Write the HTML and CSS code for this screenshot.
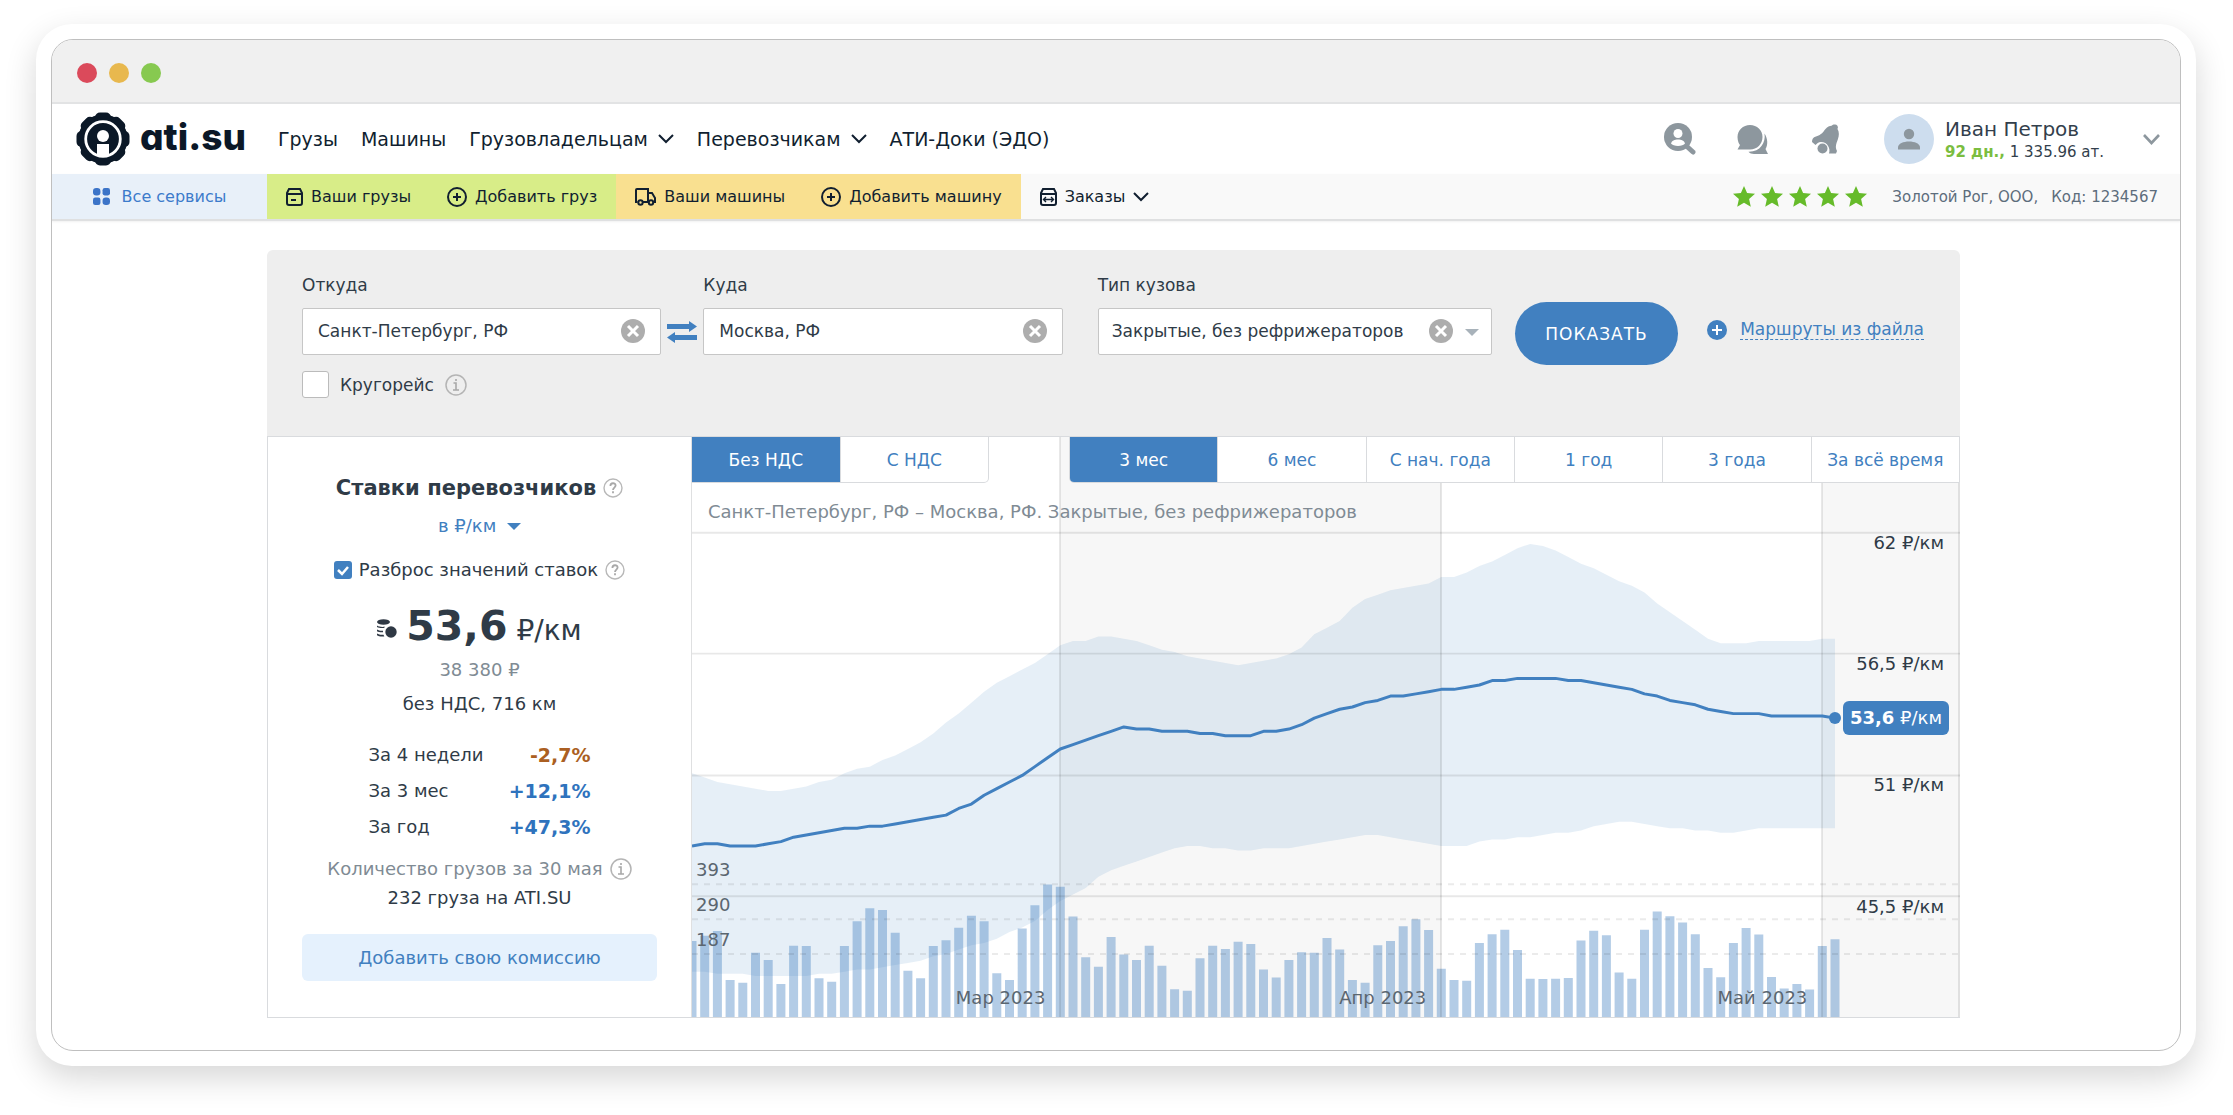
FILE: index.html
```html
<!DOCTYPE html>
<html lang="ru">
<head>
<meta charset="utf-8">
<meta name="viewport" content="width=device-width, initial-scale=1">
<title>ATI.SU — ставки перевозчиков</title>
<link rel="stylesheet" href="styles.css">
</head>
<body>
<svg class="sprite" aria-hidden="true">
  <symbol id="i-chevron" viewBox="0 0 16 10"><path d="M1 1l7 7 7-7" fill="none" stroke="currentColor" stroke-width="2"/></symbol>
  <symbol id="i-plus" viewBox="0 0 20 20"><circle cx="10" cy="10" r="9" fill="none" stroke="currentColor" stroke-width="2"/><path d="M10 6v8M6 10h8" stroke="currentColor" stroke-width="2"/></symbol>
  <symbol id="i-clear" viewBox="0 0 24 24"><circle cx="12" cy="12" r="12" fill="#adadad"/><path d="M7 7l10 10M17 7L7 17" stroke="#fff" stroke-width="3"/></symbol>
  <symbol id="i-info" viewBox="0 0 22 22"><circle cx="11" cy="11" r="10" fill="none" stroke="#b4b4b4" stroke-width="1.500"/><path d="M8.500 9H11v7M8 16h6M11 5v2" fill="none" stroke="#a8a8a8" stroke-width="1.600"/></symbol>
  <symbol id="i-help" viewBox="0 0 20 20"><circle cx="10" cy="10" r="9" fill="none" stroke="#b8b8b8" stroke-width="1.400"/><path d="M7.400 8c0-3.600 5.200-3.600 5.200-.4 0 2-2.600 2-2.600 4.400M10 13.200v2" fill="none" stroke="#a8a8a8" stroke-width="1.800"/></symbol>
  <symbol id="i-star" viewBox="0 0 22 21"><path d="M11 0l3.100 7 7.900.8-5.900 5.200 1.700 7.800-6.800-4-6.800 4 1.700-7.800L0 7.800 7.900 7z" fill="#66bb2a"/></symbol>
</svg>

<div class="device">
<div class="window">
  <div class="titlebar"><span class="dot dot-red"></span><span class="dot dot-yellow"></span><span class="dot dot-green"></span></div>

  <header class="header">
    <a class="logo" href="#">
      <svg width="54" height="54" viewBox="0 0 54 54" aria-hidden="true">
        <g fill="#0b1827">
          <circle cx="27" cy="27" r="24.600"/>
          <rect x="19" y="0.500" width="16" height="53" rx="5"/>
          <rect x="19" y="0.500" width="16" height="53" rx="5" transform="rotate(45 27 27)"/>
          <rect x="19" y="0.500" width="16" height="53" rx="5" transform="rotate(90 27 27)"/>
          <rect x="19" y="0.500" width="16" height="53" rx="5" transform="rotate(135 27 27)"/>
        </g>
        <circle cx="27" cy="27" r="17.300" fill="none" stroke="#fff" stroke-width="2.800"/>
        <circle cx="27" cy="24" r="6" fill="#fff"/>
        <path d="M21 32h12v11.500H21z" fill="#fff"/>
      </svg>
      <span class="logo-text">ati.su</span>
    </a>
    <nav class="mainnav">
      <a href="#">Грузы</a>
      <a href="#">Машины</a>
      <a href="#">Грузовладельцам <svg class="chev"><use href="#i-chevron"/></svg></a>
      <a href="#">Перевозчикам <svg class="chev"><use href="#i-chevron"/></svg></a>
      <a href="#">АТИ-Доки (ЭДО)</a>
    </nav>
    <div class="tools">
      <button type="button" aria-label="Поиск фирм"><svg width="32" height="32" viewBox="0 0 32 32"><circle cx="14" cy="14" r="14" fill="#8d979e"/><path d="M23.500 24l5.500 5" stroke="#8d979e" stroke-width="5" stroke-linecap="round"/><circle cx="14" cy="10.500" r="4.500" fill="#fff"/><path d="M7 20.500c1-5.500 13-5.500 14 0-2 3.200-12 3.200-14 0z" fill="#fff"/></svg></button>
      <button type="button" aria-label="Сообщения"><svg width="32" height="32" viewBox="0 0 32 32"><path d="M13 2c-7 0-12.500 5.300-12.500 12 0 4 1.500 7 2.500 8L.5 26.500H13c7 0 12.500-5.500 12.500-12.500S20 2 13 2zM27.500 10.500C31 16 31 22 28.500 26l2.500 5H17c-2 0-4.500-1-5.500-2.300C23 29 29 20 27.500 10.500z" fill="#8d979e"/></svg></button>
      <button type="button" aria-label="Уведомления"><svg width="32" height="32" viewBox="0 0 32 32"><path d="M24.500 1.500a3 3 0 0 1 3 4.500c1.800 3 1.800 6.500.3 10.500-1.800 5-2.800 7.500-.8 11.500l-1 2.500h-7c1.800-5-1.500-11.500-8-11.500-2.800 0-4 1.500-5.500 3L2 19c0-3 1-4.500 4-5.500C12 11.500 13 9 15.500 6c2-2.500 4-3 6-3.200 1-1 1.800-1.300 3-1.300z" fill="#8d979e"/><circle cx="12.500" cy="25.500" r="5" fill="#8d979e"/></svg></button>
    </div>
    <div class="user">
      <span class="avatar"><svg width="22" height="22" viewBox="0 0 22 22"><circle cx="11" cy="6" r="5.200" fill="#8d979e"/><path d="M0 21.500v-2c0-8 22-8 22 0v2z" fill="#8d979e"/></svg></span>
      <div class="user-info">
        <div class="user-name">Иван Петров</div>
        <div class="user-balance"><b>92 дн.,</b> 1 335.96 ат.</div>
      </div>
      <button type="button" class="user-toggle" aria-label="Меню"><svg width="17" height="11" viewBox="0 0 17 11"><path d="M1 1l7.500 8L16 1" fill="none" stroke="#8d979e" stroke-width="2.600"/></svg></button>
    </div>
  </header>

  <nav class="subnav">
    <a class="services" href="#"><svg width="17" height="17" viewBox="0 0 16 16"><g fill="#3c74c8"><rect width="7" height="7" rx="3"/><rect x="9" width="7" height="7" rx="2"/><rect y="9" width="7" height="7" rx="2"/><rect x="9" y="9" width="7" height="7" rx="3"/></g></svg>Все сервисы</a>
    <div class="group green">
      <a href="#"><svg width="17" height="18" viewBox="0 0 17 18"><path d="M3 1h11l2 4v10q0 2-2 2H3q-2 0-2-2V5zM1 6h15M5 12h5" fill="none" stroke="currentColor" stroke-width="2"/></svg>Ваши грузы</a>
      <a href="#"><svg width="20" height="20"><use href="#i-plus"/></svg>Добавить груз</a>
    </div>
    <div class="group yellow">
      <a href="#"><svg width="21" height="18" viewBox="0 0 21 18"><path d="M2.500 14H1V2q0-1 1-1h11v13H8M13 5h4l3 5v4h-1" fill="none" stroke="currentColor" stroke-width="2"/><g fill="none" stroke="currentColor" stroke-width="2"><circle cx="5.500" cy="14.500" r="2.200"/><circle cx="16" cy="14.500" r="2.200"/></g></svg>Ваши машины</a>
      <a href="#"><svg width="20" height="20"><use href="#i-plus"/></svg>Добавить машину</a>
    </div>
    <div class="group">
      <a href="#"><svg width="17" height="18" viewBox="0 0 17 18"><path d="M3 1h11l2 4v10q0 2-2 2H3q-2 0-2-2V5zM1 6h15" fill="none" stroke="currentColor" stroke-width="2"/><path d="M4 11.500h9M6 9l-2.500 2.500L6 14M11 9l2.500 2.500L11 14" fill="none" stroke="currentColor" stroke-width="1.400"/></svg>Заказы <svg class="chev"><use href="#i-chevron"/></svg></a>
    </div>
    <div class="firm">
      <span class="stars" role="img" aria-label="Рейтинг 5 из 5"><svg><use href="#i-star"/></svg><svg><use href="#i-star"/></svg><svg><use href="#i-star"/></svg><svg><use href="#i-star"/></svg><svg><use href="#i-star"/></svg></span>
      <span>Золотой Рог, ООО,</span>
      <span>Код: 1234567</span>
    </div>
  </nav>

  <main class="content">
    <form class="filter">
      <div class="field from">
        <label for="from">Откуда</label>
        <div class="control"><input id="from" type="text" value="Санкт-Петербург, РФ"><button type="button" class="clear" aria-label="Очистить"><svg><use href="#i-clear"/></svg></button></div>
      </div>
      <button type="button" class="swap" aria-label="Поменять местами"><svg width="30" height="22" viewBox="0 0 30 22"><path d="M0 3h22V0l8 5.500-8 5.500V8H0zM30 19H8v3l-8-5.500L8 11v3h22z" fill="#4180c0"/></svg></button>
      <div class="field to">
        <label for="to">Куда</label>
        <div class="control"><input id="to" type="text" value="Москва, РФ"><button type="button" class="clear" aria-label="Очистить"><svg><use href="#i-clear"/></svg></button></div>
      </div>
      <div class="field body-type">
        <label for="body-type">Тип кузова</label>
        <div class="control"><select id="body-type"><option>Закрытые, без рефрижераторов</option></select><button type="button" class="clear" aria-label="Очистить"><svg><use href="#i-clear"/></svg></button><span class="arrow"></span></div>
      </div>
      <button type="submit" class="submit">ПОКАЗАТЬ</button>
      <div class="routes"><svg width="20" height="20" viewBox="0 0 20 20"><circle cx="10" cy="10" r="10" fill="#4180c0"/><path d="M10 5v10M5 10h10" stroke="#fff" stroke-width="2"/></svg><a href="#">Маршруты из файла</a></div>
      <div class="round"><input id="round" type="checkbox"><label for="round">Кругорейс</label><svg class="info"><use href="#i-info"/></svg></div>
    </form>

    <section class="panel">
      <aside class="rates">
        <h1>Ставки перевозчиков <svg class="help"><use href="#i-help"/></svg></h1>
        <div class="unit"><select aria-label="Единица"><option>в ₽/км</option></select><span class="arrow-blue"></span></div>
        <div class="spread"><input id="spread" type="checkbox" checked><label for="spread">Разброс значений ставок</label><svg class="help"><use href="#i-help"/></svg></div>
        <div class="rate"><svg width="20" height="19" viewBox="0 0 20 19"><g fill="#2f3844"><ellipse cx="6.500" cy="3" rx="6.500" ry="2.800"/><path d="M0 6.500c2 1.500 5 1.600 8 1.300L7 9C4 9.300 1.500 8.800 0 8zM0 10.500c2 1.300 4 1.400 6 1.200v1.500c-2 .2-4.500 0-6-1zM0 14.500c2 1.300 4 1.400 6.500 1.200l.8 1.700c-3 .3-6 0-7.300-1.200z"/><circle cx="14" cy="13" r="5.700"/></g></svg><b>53,6</b><span>₽/км</span></div>
        <div class="total">38 380 ₽</div>
        <div class="terms">без НДС, 716 км</div>
        <table class="changes">
          <tr><th scope="row">За 4 недели</th><td class="down">-2,7%</td></tr>
          <tr><th scope="row">За 3 мес</th><td>+12,1%</td></tr>
          <tr><th scope="row">За год</th><td>+47,3%</td></tr>
        </table>
        <div class="loads-title">Количество грузов за 30 мая <svg class="info"><use href="#i-info"/></svg></div>
        <div class="loads">232 груза на ATI.SU</div>
        <button type="button" class="commission">Добавить свою комиссию</button>
      </aside>

      <div class="chart">
        <svg id="plot" class="plot" viewBox="0 0 1268 581" preserveAspectRatio="none" role="img" aria-label="График ставок"></svg>
        <div class="tabs">
          <div class="tabset vat"><button type="button" class="active">Без НДС</button><button type="button">С НДС</button></div>
          <div class="tabset period"><button type="button" class="active">3 мес</button><button type="button">6 мес</button><button type="button">С нач. года</button><button type="button">1 год</button><button type="button">3 года</button><button type="button">За всё время</button></div>
        </div>
        <p class="caption">Санкт-Петербург, РФ – Москва, РФ. Закрытые, без рефрижераторов</p>
        <div id="labels"></div>
      </div>
    </section>
  </main>
</div>
</div>
<script src="chart.js"></script>
</body>
</html>
```
FILE: styles.css
```css
* { box-sizing: border-box; }

body {
  margin: 0;
  padding: 24px 37px 48px 36px;
  background: #fff;
  color: #2f3b47;
  font: 17px/24px "DejaVu Sans", Verdana, sans-serif;
}

a { color: inherit; text-decoration: none; }
button, input, select { font: inherit; color: inherit; }
button { border: 0; padding: 0; background: none; cursor: pointer; }
svg { display: block; flex: none; }
.sprite { position: absolute; width: 0; height: 0; }

.device {
  padding: 15px;
  border-radius: 36px;
  background: #fff;
  box-shadow: 0 12px 32px rgba(0, 0, 0, .16);
}
.window {
  border: 1px solid #bfbfbf;
  border-radius: 22px;
  overflow: hidden;
}
.titlebar {
  display: flex;
  align-items: center;
  gap: 12px;
  height: 64px;
  padding: 4px 25px 0;
  border-bottom: 2px solid #e2e3e4;
  background: #f0f0f0;
}
.dot { width: 20px; height: 20px; border-radius: 50%; }
.dot-red { background: #db4a5b; }
.dot-yellow { background: #e8b84e; }
.dot-green { background: #87c950; }

/* header */
.header {
  display: flex;
  align-items: center;
  height: 70px;
  padding: 0 20px 0 24px;
  color: #111f30;
}
.logo { display: flex; align-items: center; gap: 10px; color: #0b1827; }
.logo-text { padding-bottom: 4px; font: 800 37px/40px Inter, sans-serif; font-feature-settings: "cv11"; }
.mainnav { display: flex; gap: 23px; margin-left: 32px; font-size: 19px; }
.mainnav a { display: flex; align-items: center; gap: 10px; }
.chev { width: 16px; height: 10px; }
.tools { display: flex; gap: 41px; margin-left: auto; }
.user { display: flex; align-items: center; gap: 11px; margin-left: 42px; }
.avatar { display: grid; place-items: center; width: 50px; height: 50px; border-radius: 50%; background: #cdddee; }
.user-info { color: #333f4c; white-space: nowrap; }
.user-name { font-size: 20px; line-height: 26px; }
.user-balance { font-size: 15px; line-height: 20px; }
.user-balance b { color: #7bbd3f; }
.user-toggle { margin-left: 28px; }

/* services bar */
.subnav {
  display: flex;
  height: 47px;
  border-bottom: 2px solid #dfe0e1;
  background: #f9f9f9;
  color: #111f30;
  font-size: 16px;
  box-shadow: 0 1px 2px rgba(0, 0, 0, .06);
}
.subnav a { display: flex; align-items: center; gap: 8px; white-space: nowrap; }
.subnav .services { justify-content: center; gap: 12px; width: 215px; background: #e8f0f9; color: #3c7bcb; }
.group { display: flex; gap: 36px; padding: 0 19px; }
.green { background: #d8ed88; }
.yellow { background: #f9e090; }
.firm { display: flex; align-items: center; gap: 13px; margin-left: auto; padding-right: 22px; color: #5d6d7c; font-size: 15px; white-space: nowrap; }
.stars { display: flex; gap: 6px; margin-right: 12px; }
.stars svg { width: 22px; height: 21px; }

/* filter */
.content { padding: 29px 220px 32px 215px; }
.filter {
  display: grid;
  grid-template-columns: 359fr 42px 359fr 35px 394fr 23px 163px 29px 217px;
  grid-template-rows: 37px 47px auto;
  align-items: center;
  height: 186px;
  padding: 21px 36px 0 35px;
  border-radius: 6px 6px 0 0;
  background: #eee;
}
.field { display: contents; }
.field > label { grid-row: 1; align-self: start; line-height: 28px; }
.field > .control { grid-row: 2; }
.from > * { grid-column: 1; }
.swap { grid-area: 2 / 2; justify-self: center; }
.to > * { grid-column: 3; }
.body-type > * { grid-column: 5; }
.control { position: relative; }
.control input, .control select {
  display: block;
  width: 100%;
  height: 47px;
  padding: 0 50px 2px 15px;
  border: 1px solid #c6c6c6;
  border-radius: 2px;
  background: #fff;
  appearance: none;
}
.control select { padding: 0 80px 2px 13px; }
.clear { position: absolute; top: 11px; right: 16px; }
.clear svg { width: 24px; height: 24px; }
.body-type .clear { right: 39px; }
.arrow { position: absolute; top: 21px; right: 13px; border: 7px solid transparent; border-top-color: #a8b2ba; border-bottom: 0; }
.submit { grid-area: 2 / 7; height: 63px; margin-top: 4px; border-radius: 32px; background: #4180c0; color: #fff; letter-spacing: 1px; }
.routes { display: flex; grid-area: 2 / 9; align-items: center; justify-content: space-between; padding-bottom: 4px; color: #4180c0; white-space: nowrap; }
.routes a { border-bottom: 1px dashed #4180c0; line-height: 20px; }
.round { display: flex; grid-area: 3 / 1 / 4 / 5; align-self: start; align-items: center; gap: 11px; margin-top: 16px; }
.info { width: 22px; height: 22px; }
.help { width: 20px; height: 20px; }
input[type="checkbox"] { appearance: none; margin: 0; border: 1px solid #bbb; border-radius: 3px; background: #fff; }
.round input { width: 27px; height: 27px; }

/* rates summary */
.panel { display: flex; border: 1px solid #d9dbde; border-right: 0; }
.rates { display: flex; flex-direction: column; align-items: center; width: 424px; padding: 36px 34px 0; border-right: 1px solid #dfe0e1; font-size: 18px; }
h1 { display: flex; align-items: center; gap: 7px; margin: 0; font-size: 21px; line-height: 30px; }
.unit { display: flex; align-items: center; gap: 10px; margin-top: 11px; color: #4180c0; }
.unit select { appearance: none; border: 0; padding: 0; background: none; }
.arrow-blue { border: 7px solid transparent; border-top-color: #4180c0; border-bottom: 0; }
.spread { display: flex; align-items: center; gap: 7px; margin-top: 20px; }
.spread input {
  width: 18px;
  height: 18px;
  border: 0;
  background: #4180c0 url("data:image/svg+xml,%3Csvg xmlns='http://www.w3.org/2000/svg' viewBox='0 0 18 18'%3E%3Cpath d='M4 9l4 4 6-7' fill='none' stroke='white' stroke-width='2.500'/%3E%3C/svg%3E");
}
.rate { display: flex; align-items: baseline; gap: 9px; margin-top: 20px; line-height: 48px; }
.rate svg { align-self: center; }
.rate b { font-size: 41px; }
.rate span { font-size: 28px; }
.total { margin-top: 3px; color: #808b94; }
.terms { margin-top: 10px; }
.changes { width: 222px; margin-top: 21px; border-collapse: collapse; }
.changes th { padding: 0; font-weight: 400; line-height: 36px; text-align: left; }
.changes td { padding: 0; color: #2f73bd; font-size: 19px; font-weight: 700; text-align: right; }
.changes .down { color: #ab5f22; }
.loads-title { display: flex; align-items: center; gap: 7px; margin-top: 12px; color: #808b94; white-space: nowrap; }
.loads { margin-top: 5px; }
.commission { align-self: stretch; height: 47px; margin-top: 24px; border-radius: 6px; background: #e5f1fd; color: #4180c0; }

/* chart */
.chart { position: relative; flex: 1; height: 580px; }
.plot { position: absolute; inset: 0; width: 100%; height: 100%; }
.tabs { position: relative; display: flex; justify-content: space-between; margin-top: -1px; }
.tabset { display: flex; height: 47px; border: 1px solid #d9dbde; border-radius: 0 0 5px 5px; background: #fff; overflow: hidden; }
.vat { width: 297px; border-left: 0; border-bottom-left-radius: 0; }
.period { width: 891px; border-bottom-right-radius: 0; }
.tabset button { flex: 1; color: #4180c0; white-space: nowrap; }
.tabset button + button { border-left: 1px solid #d9dbde; }
.tabset .active { background: #4180c0; color: #fff; margin: -1px 0; }
.caption { position: relative; margin: 17px 0 0 16px; color: #808b94; font-size: 18px; }
.price, .count, .month, .badge { position: absolute; white-space: nowrap; font-size: 18px; line-height: 20px; }
.price { right: 16px; }
.count { left: 4px; margin-top: -25px; color: #5b6670; }
.month { bottom: 9px; margin-right: 15px; color: #5b6670; }
.badge { right: 11px; padding: 7px; border-radius: 6px; background: #4180c0; color: #fff; transform: translateY(-50%); }
.end-dot { position: absolute; width: 12px; height: 12px; border-radius: 50%; background: #4180c0; transform: translate(-50%, -50%); }
```
FILE: chart.js
```js
// Daily data, in tenths of ₽/km, from the first to the last day of the period.
const mid = [478,479,479,478,478,478,479,480,482,483,484,485,486,486,487,487,488,489,490,491,492,495,497,501,504,507,510,514,518,522,524,526,528,530,532,531,531,530,530,530,529,529,528,528,528,530,530,531,533,536,538,540,541,543,544,546,546,547,548,549,549,550,551,553,553,554,554,554,554,553,553,552,551,550,549,547,546,544,543,542,540,539,538,538,538,537,537,537,537,537,536];
const high = [511,509,507,506,505,504,503,503,504,505,507,508,511,513,514,517,519,522,525,529,534,538,543,548,552,555,558,561,565,569,571,571,573,573,572,571,569,567,566,564,563,562,561,560,561,562,563,565,568,574,577,580,586,590,592,594,595,596,597,600,600,602,605,607,610,613,615,614,612,609,606,604,601,598,596,593,588,584,580,576,572,570,570,570,571,571,571,571,571,572,572];
const low = [421,421,420,420,420,419,419,419,419,419,420,420,421,422,422,423,424,425,426,428,429,431,433,434,436,439,441,444,449,453,456,459,464,467,469,471,473,475,477,478,478,477,477,476,476,477,477,477,478,479,480,481,482,483,483,482,481,480,479,478,478,478,480,481,481,482,482,483,484,484,485,487,488,489,489,488,487,486,486,485,485,484,484,485,486,486,486,486,486,486,486];
const loads = [227,242,256,112,104,192,171,100,213,212,117,107,212,285,323,318,251,139,117,212,229,266,301,285,132,112,264,332,393,387,299,179,151,239,187,171,213,154,85,80,176,213,203,225,218,143,119,171,194,192,236,202,112,104,214,227,270,291,259,145,112,110,221,247,260,200,116,115,116,118,228,257,244,134,116,260,314,300,281,247,147,120,221,265,246,121,87,100,84,212,232];

const W = 1268, H = 581, STEP = 12.7;
const x = day => day * STEP;
const y = tenths => 339 + (510 - tenths) * 2.209;
const line = values => values.map((v, day) => x(day).toFixed(1) + ' ' + y(v).toFixed(1));

const months = [[29, 'Мар 2023'], [59, 'Апр 2023'], [89, 'Май 2023']];
const prices = [[620, '62 ₽/км'], [565, '56,5 ₽/км'], [510, '51 ₽/км'], [455, '45,5 ₽/км']];
const counts = [393, 290, 187];
const countY = n => H + 1 - n * 0.34;

let svg = '';
svg += `<path fill="#f7f7f7" d="M${x(29)} 0H${x(59)}V${H}H${x(29)}zM${x(89)} 0H${W}V${H}H${x(89)}z"/>`;
svg += `<path fill="#4180c0" fill-opacity=".13" d="M${line(high).join('L')}L${line(low).reverse().join('L')}z"/>`;
svg += `<path fill="#4180c0" fill-opacity=".4" d="${loads.map((n, day) => {
  const left = Math.max(0, x(day) - 4.5), right = x(day) + 4.5;
  return `M${left} ${H}V${countY(n)}H${right}V${H}z`;
}).join('')}"/>`;
svg += `<g stroke="#000" stroke-opacity=".09" stroke-width="2">`;
prices.forEach(([v]) => { svg += `<path d="M0 ${Math.floor(y(v))}H${W}"/>`; });
months.forEach(([day]) => { svg += `<path d="M${Math.round(x(day))} 0V${H}"/>`; });
svg += `<path d="M${W - 1} 0V${H}"/></g>`;
svg += `<g stroke="#000" stroke-opacity=".08" stroke-width="2" stroke-dasharray="6 6">`;
counts.forEach(n => { svg += `<path d="M0 ${Math.round(countY(n))}H${W}"/>`; });
svg += `</g><path fill="none" stroke="#4180c0" stroke-width="3" stroke-linejoin="round" d="M${line(mid).join('L')}"/>`;
document.getElementById('plot').innerHTML = svg;

const pct = (v, total) => (v / total * 100).toFixed(2) + '%';
let labels = '';
prices.forEach(([v, text]) => { labels += `<span class="price" style="top:${pct(y(v), H)}">${text}</span>`; });
counts.forEach(n => { labels += `<span class="count" style="top:${pct(countY(n), H)}">${n}</span>`; });
months.forEach(([day, text]) => { labels += `<span class="month" style="right:${pct(W - x(day), W)}">${text}</span>`; });
labels += `<span class="end-dot" style="left:${pct(x(90), W)};top:${pct(y(536), H)}"></span>`;
labels += `<span class="badge" style="top:${pct(y(536), H)}"><b>53,6</b> ₽/км</span>`;
document.getElementById('labels').innerHTML = labels;
```
